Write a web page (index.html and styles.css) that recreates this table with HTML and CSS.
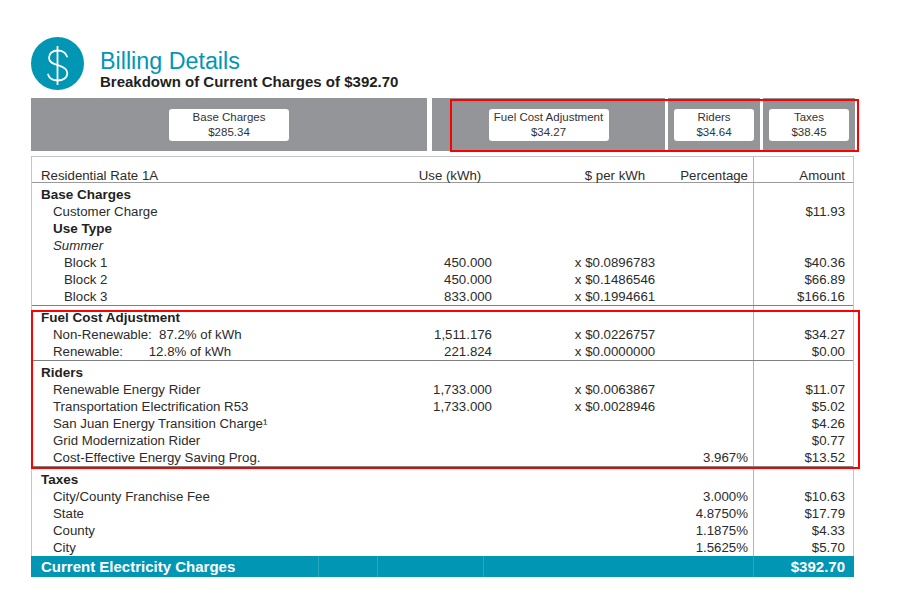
FILE: index.html
```html
<!DOCTYPE html>
<html lang="en">
<head>
<meta charset="utf-8">
<title>Billing Details</title>
<link rel="stylesheet" href="styles.css">
</head>
<body>
<div class="page">
  <header class="head">
    <svg class="icon" width="53" height="53" viewBox="0 0 53 53" aria-hidden="true">
      <circle cx="26.5" cy="26.5" r="26.5" fill="#0096b4"/>
      <path d="M26.5 9 V48" stroke="#fff" stroke-width="1.8" fill="none"/>
      <path d="M36 19.5 C34.5 15.5 31 13.5 26.8 13.5 C21.5 13.5 18 16.5 18 20.8 C18 25.3 22 26.8 26.8 28.2 C32 29.7 36.3 31.6 36.3 36.2 C36.3 40.6 32.3 43.5 26.8 43.5 C21.8 43.5 18.3 41.2 17 37.5" stroke="#fff" stroke-width="1.8" fill="none" stroke-linecap="round"/>
    </svg>
    <div class="titles">
      <h1 class="title">Billing Details</h1>
      <p class="subtitle">Breakdown of Current Charges of $392.70</p>
    </div>
  </header>

  <div class="summary-wrap">
    <div class="summary">
      <div class="seg seg-base"><div class="chip chip-wide">Base Charges<br>$285.34</div></div>
      <div class="seg seg-fuel"><div class="chip chip-wide">Fuel Cost Adjustment<br>$34.27</div></div>
      <div class="seg seg-small"><div class="chip chip-narrow">Riders<br>$34.64</div></div>
      <div class="seg seg-small"><div class="chip chip-narrow">Taxes<br>$38.45</div></div>
    </div>
    <div class="highlight highlight-summary"></div>
  </div>

  <div class="table-wrap">
    <div class="table">
      <div class="row head-row">
        <div class="c-label">Residential Rate 1A</div>
        <div class="c-use c-center">Use (kWh)</div>
        <div class="c-rate">$ per kWh</div>
        <div class="c-pct">Percentage</div>
        <div class="c-amt">Amount</div>
      </div>

      <div class="section">
        <div class="row"><div class="c-label group">Base Charges</div></div>
        <div class="row"><div class="c-label ind1">Customer Charge</div><div class="c-use"></div><div class="c-rate"></div><div class="c-pct"></div><div class="c-amt">$11.93</div></div>
        <div class="row"><div class="c-label ind1 group">Use Type</div></div>
        <div class="row"><div class="c-label ind1 season">Summer</div></div>
        <div class="row"><div class="c-label ind2">Block 1</div><div class="c-use">450.000</div><div class="c-rate">x $0.0896783</div><div class="c-pct"></div><div class="c-amt">$40.36</div></div>
        <div class="row"><div class="c-label ind2">Block 2</div><div class="c-use">450.000</div><div class="c-rate">x $0.1486546</div><div class="c-pct"></div><div class="c-amt">$66.89</div></div>
        <div class="row"><div class="c-label ind2">Block 3</div><div class="c-use">833.000</div><div class="c-rate">x $0.1994661</div><div class="c-pct"></div><div class="c-amt">$166.16</div></div>
      </div>

      <div class="section">
        <div class="row"><div class="c-label group">Fuel Cost Adjustment</div></div>
        <div class="row"><div class="c-label ind1 pre">Non-Renewable:  87.2% of kWh</div><div class="c-use">1,511.176</div><div class="c-rate">x $0.0226757</div><div class="c-pct"></div><div class="c-amt">$34.27</div></div>
        <div class="row"><div class="c-label ind1 pre">Renewable:       12.8% of kWh</div><div class="c-use">221.824</div><div class="c-rate">x $0.0000000</div><div class="c-pct"></div><div class="c-amt">$0.00</div></div>
      </div>

      <div class="section">
        <div class="row"><div class="c-label group">Riders</div></div>
        <div class="row"><div class="c-label ind1">Renewable Energy Rider</div><div class="c-use">1,733.000</div><div class="c-rate">x $0.0063867</div><div class="c-pct"></div><div class="c-amt">$11.07</div></div>
        <div class="row"><div class="c-label ind1">Transportation Electrification R53</div><div class="c-use">1,733.000</div><div class="c-rate">x $0.0028946</div><div class="c-pct"></div><div class="c-amt">$5.02</div></div>
        <div class="row"><div class="c-label ind1">San Juan Energy Transition Charge¹</div><div class="c-use"></div><div class="c-rate"></div><div class="c-pct"></div><div class="c-amt">$4.26</div></div>
        <div class="row"><div class="c-label ind1">Grid Modernization Rider</div><div class="c-use"></div><div class="c-rate"></div><div class="c-pct"></div><div class="c-amt">$0.77</div></div>
        <div class="row"><div class="c-label ind1">Cost-Effective Energy Saving Prog.</div><div class="c-use"></div><div class="c-rate"></div><div class="c-pct">3.967%</div><div class="c-amt">$13.52</div></div>
      </div>

      <div class="section section-last">
        <div class="row"><div class="c-label group">Taxes</div></div>
        <div class="row"><div class="c-label ind1">City/County Franchise Fee</div><div class="c-use"></div><div class="c-rate"></div><div class="c-pct">3.000%</div><div class="c-amt">$10.63</div></div>
        <div class="row"><div class="c-label ind1">State</div><div class="c-use"></div><div class="c-rate"></div><div class="c-pct">4.8750%</div><div class="c-amt">$17.79</div></div>
        <div class="row"><div class="c-label ind1">County</div><div class="c-use"></div><div class="c-rate"></div><div class="c-pct">1.1875%</div><div class="c-amt">$4.33</div></div>
        <div class="row"><div class="c-label ind1">City</div><div class="c-use"></div><div class="c-rate"></div><div class="c-pct">1.5625%</div><div class="c-amt">$5.70</div></div>
      </div>
    </div>

    <div class="total">
      <div class="t-cell t-label">Current Electricity Charges</div>
      <div class="t-cell"></div>
      <div class="t-cell"></div>
      <div class="t-cell"></div>
      <div class="t-cell t-amt">$392.70</div>
    </div>

    <div class="highlight highlight-table"></div>
  </div>
</div>
</body>
</html>
```

FILE: styles.css
```css
* { box-sizing: border-box; }

html, body {
  margin: 0;
  padding: 0;
  background: #fff;
}

body {
  font-family: "Liberation Sans", Arial, Helvetica, sans-serif;
  color: #2b2b2b;
}

.page {
  padding: 37px 0 0 31px;
  width: 901px;
}

/* Header */
.head {
  display: flex;
  align-items: flex-start;
  gap: 16px;
  height: 53px;
}

.icon {
  display: block;
  flex: none;
}

.titles {
  padding-top: 12px;
}

.title {
  margin: 0;
  font-size: 23.3px;
  line-height: 24px;
  font-weight: normal;
  color: #0096b4;
}

.subtitle {
  margin: 0;
  font-size: 15px;
  line-height: 17px;
  font-weight: bold;
  color: #231f20;
}

/* Summary bar */
.summary-wrap {
  position: relative;
  margin-top: 8px;
  width: 824px;
}

.summary {
  display: flex;
  gap: 3px;
  height: 53px;
}

.seg {
  background: #939598;
  display: flex;
  align-items: center;
  justify-content: center;
}

.seg-base { width: 396px; margin-right: 2px; }
.seg-fuel { width: 233px; }
.seg-small { width: 92px; }

.chip {
  background: #fff;
  border-radius: 3px;
  height: 32px;
  padding-top: 1px;
  font-size: 11.5px;
  line-height: 15px;
  text-align: center;
  color: #333;
}

.chip-wide { width: 120px; }
.chip-narrow { width: 80px; }

.highlight {
  position: absolute;
  border: 2px solid #ff0000;
  pointer-events: none;
}

.highlight-summary {
  top: 1px;
  left: 419px;
  width: 409px;
  height: 53px;
}

/* Table */
.table-wrap {
  position: relative;
  margin-top: 5px;
  width: 823px;
}

.table {
  border: 1px solid #c4c4c4;
  border-bottom: none;
  background-image: linear-gradient(#b4b4b4, #b4b4b4);
  background-repeat: no-repeat;
  background-size: 1px 100%;
  background-position: 721px 0;
  font-size: 13.25px;
}

.row {
  display: grid;
  grid-template-columns: 368px 100px 170px 83px 100px;
  height: 17px;
  padding-top: 2.5px;
  line-height: 14.5px;
  white-space: nowrap;
}

.head-row {
  height: 26px;
  padding-top: 11px;
  line-height: 15px;
  border-bottom: 1px solid #9a9a9a;
}

.c-label { padding-left: 9px; }
.c-use { text-align: right; padding-right: 8px; }
.c-center { text-align: center; padding-right: 0; }
.c-rate { text-align: center; padding-left: 60px; }
.c-pct { text-align: right; padding-right: 5px; }
.c-amt { text-align: right; padding-right: 8px; }

.group {
  font-weight: bold;
  font-size: 13.5px;
  color: #231f20;
}

.ind1 { padding-left: 21px; }
.ind2 { padding-left: 32px; }

.season { font-style: italic; }

.pre { white-space: pre; }

.section {
  padding: 2px 0 1px;
  border-bottom: 1px solid #808080;
}

.section-last {
  padding-top: 3px;
  border-bottom: none;
}

/* Total bar */
.total {
  display: grid;
  grid-template-columns: 287px 59px 106px 270px 101px;
  height: 21px;
  background: #0096b4;
  color: #fff;
  font-weight: bold;
  font-size: 15px;
  line-height: 21px;
}

.t-cell + .t-cell {
  border-left: 1px solid rgba(255, 255, 255, 0.16);
}

.t-label { padding-left: 10px; white-space: nowrap; }
.t-amt { text-align: right; padding-right: 9px; }

.highlight-table {
  top: 154px;
  left: 0;
  width: 829px;
  height: 159px;
}
```
